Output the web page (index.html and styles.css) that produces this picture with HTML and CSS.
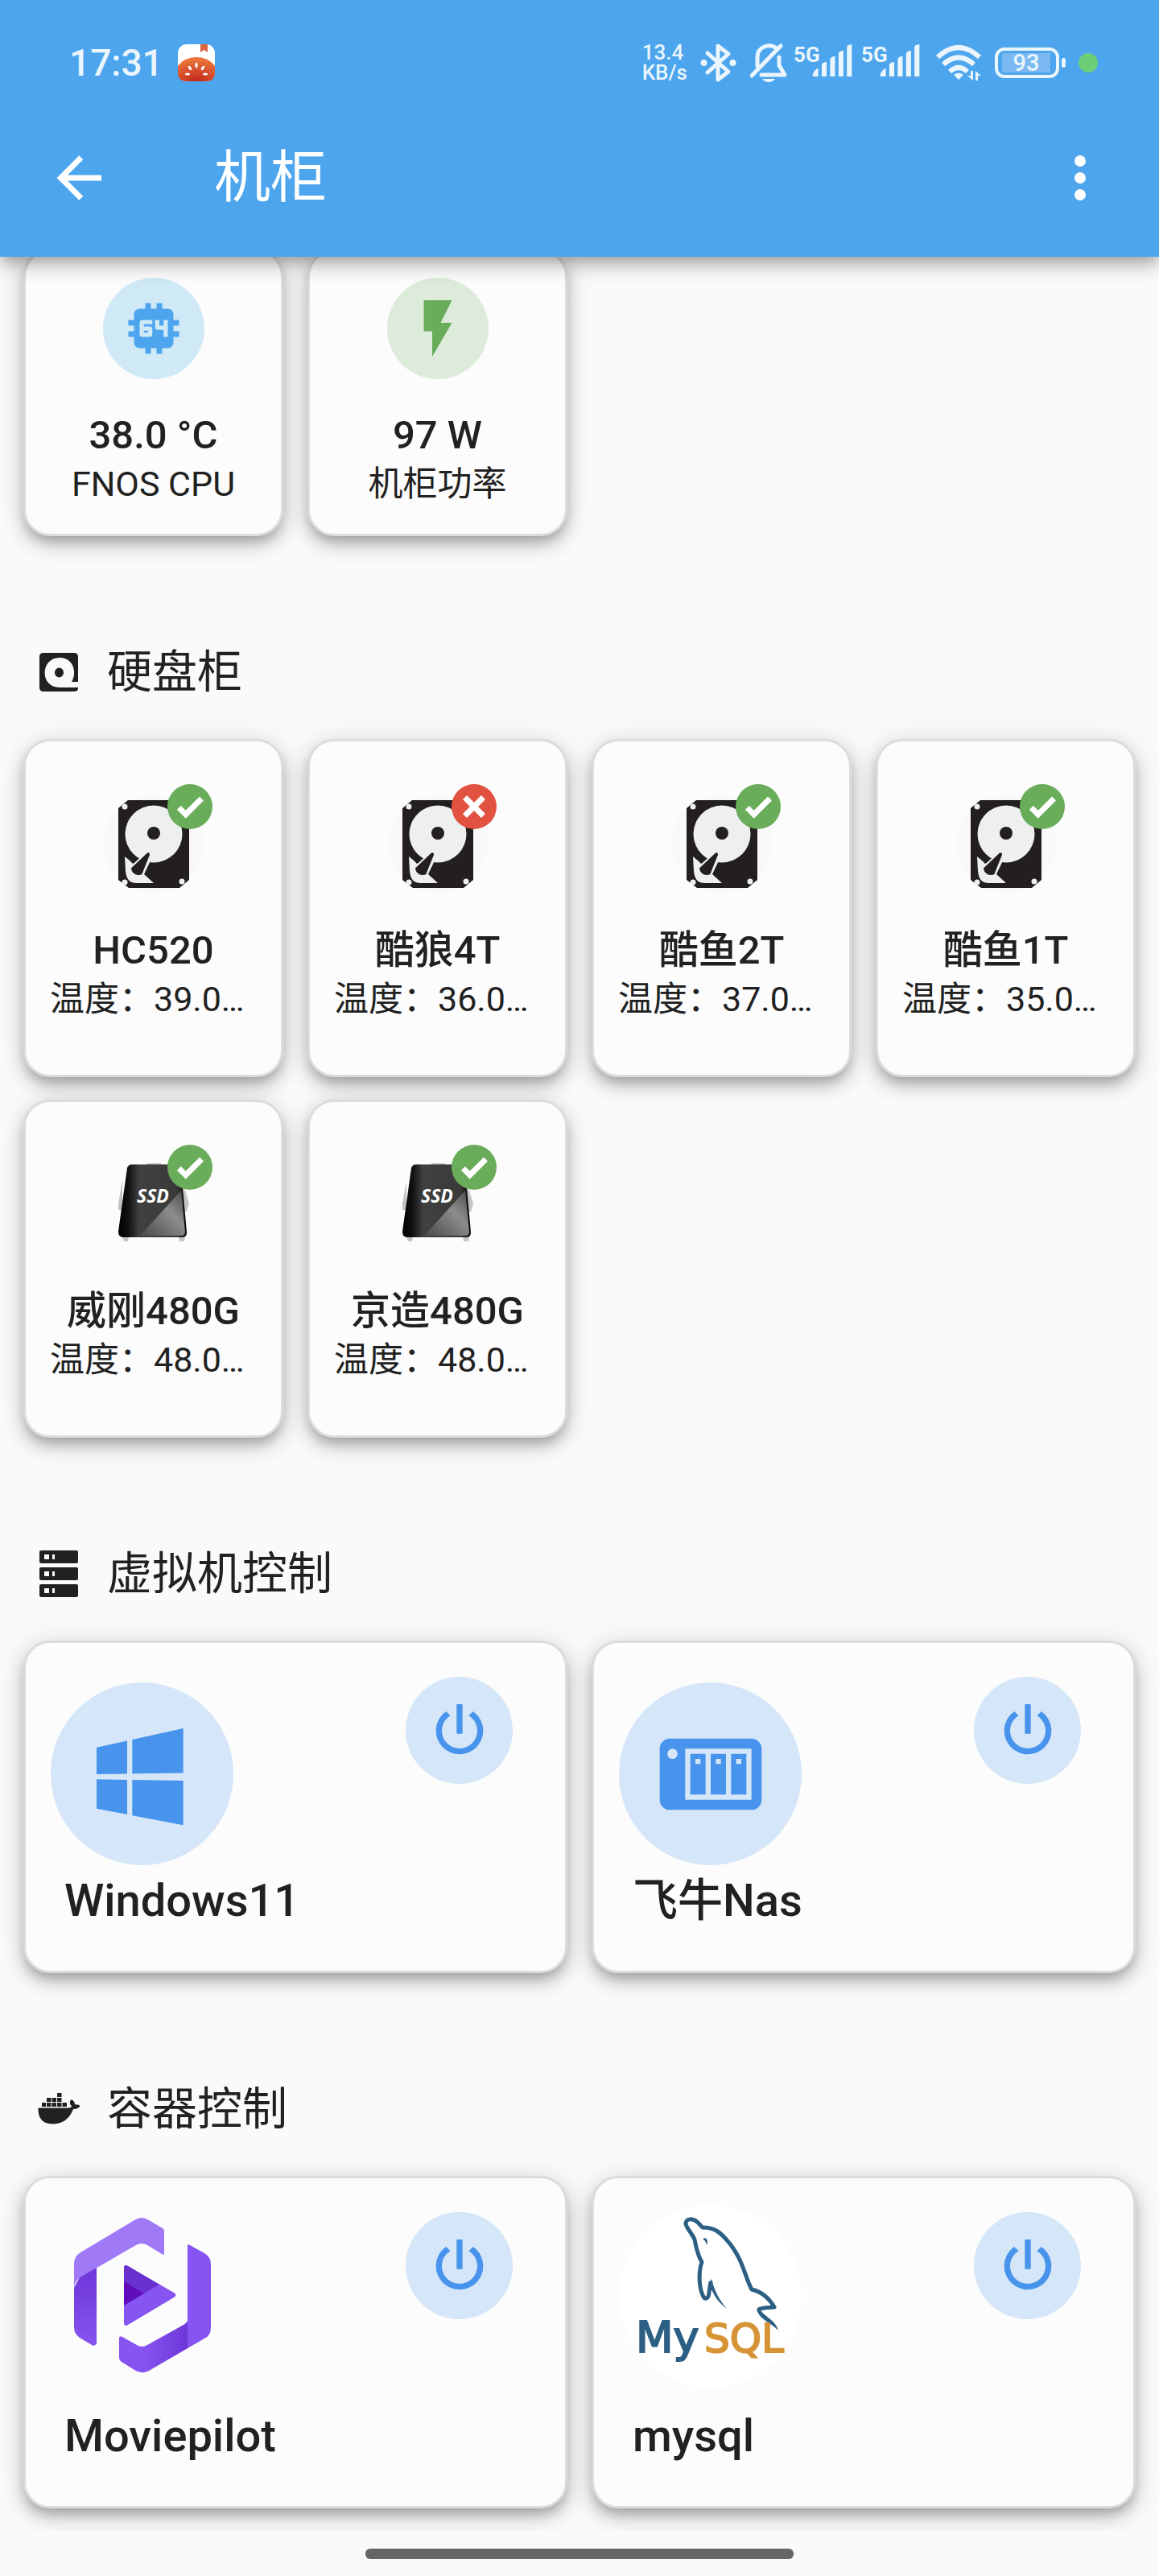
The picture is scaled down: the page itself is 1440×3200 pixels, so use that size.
FILE: index.html
```html
<!DOCTYPE html>
<html lang="zh-CN">
<head>
<meta charset="UTF-8">
<meta name="viewport" content="width=device-width, initial-scale=1.0">
<title>机柜</title>
<link rel="stylesheet" href="styles.css">
</head>

<body>
<!-- shared icons -->
<svg class="sprite" aria-hidden="true">
    <defs>
        <linearGradient id="gloss" x1="0" y1="1" x2="1" y2="0">
            <stop offset="0" stop-color="#4a4a4a"/>
            <stop offset="0.6" stop-color="#8c8c8c"/>
            <stop offset="1" stop-color="#4a4a4a"/>
        </linearGradient>
        <linearGradient id="case" x1="0" y1="0" x2="1" y2="0">
            <stop offset="0" stop-color="#000"/>
            <stop offset="0.15" stop-color="#111"/>
            <stop offset="0.3" stop-color="#404040"/>
            <stop offset="0.85" stop-color="#3a3a3a"/>
            <stop offset="1" stop-color="#000"/>
        </linearGradient>
        <linearGradient id="mp-left" x1="0" y1="0" x2="0" y2="1">
            <stop offset="0" stop-color="#6d35d8"/>
            <stop offset="1" stop-color="#8654f0"/>
        </linearGradient>
        <linearGradient id="mp-bottom" x1="0" y1="0" x2="1" y2="0">
            <stop offset="0.35" stop-color="#8654f0"/>
            <stop offset="1" stop-color="#6d35d8"/>
        </linearGradient>
        <radialGradient id="tomato" cx="0.5" cy="1" r="0.9">
            <stop offset="0" stop-color="#c4241c"/>
            <stop offset="1" stop-color="#e9743a"/>
        </radialGradient>
    </defs>
    <symbol id="check" viewBox="0 0 24 24">
        <path d="M9,20.42L2.79,14.21L5.62,11.38L9,14.77L18.88,4.88L21.71,7.71L9,20.42Z"/>
    </symbol>
    <symbol id="close" viewBox="0 0 24 24">
        <path d="M20 6.91L17.09 4L12 9.09L6.91 4L4 6.91L9.09 12L4 17.09L6.91 20L12 14.91L17.09 20L20 17.09L14.91 12L20 6.91Z"/>
    </symbol>
    <symbol id="power" viewBox="0 0 24 24">
        <path d="M16.56,5.44L15.11,6.89C16.84,7.94 18,9.83 18,12A6,6 0 0,1 12,18A6,6 0 0,1 6,12C6,9.83 7.16,7.94 8.88,6.88L7.44,5.44C5.36,6.88 4,9.28 4,12A8,8 0 0,0 12,20A8,8 0 0,0 20,12C20,9.28 18.64,6.88 16.56,5.44M13,3H11V13H13"/>
    </symbol>
    <symbol id="hdd" viewBox="0 0 126 126">
        <circle cx="63" cy="63" r="62" fill="#f9f9f9"/>
        <path fill="#231f20" d="M31 9H95L107 19V108L95 118H32L19 108V19Z"/>
        <circle cx="63" cy="51" r="35.500" fill="#eef0f0"/>
        <path fill="#eef0f0" d="M27 79L37 87L60 82L51 101L63 112H42C32 112 29 106 28 97Z"/>
        <path fill="#231f20" d="M26 76L28 70L44 84L37 88Z"/>
        <path fill="#231f20" stroke="#eef0f0" stroke-width="2" d="M53 75C56 72 59 73 59 77L49 102C41 105 34 100 34 93Z"/>
        <circle cx="63" cy="50" r="8" fill="#231f20"/>
        <g fill="#eef0f0">
            <circle cx="27" cy="17" r="3.500"/>
            <circle cx="27" cy="111" r="3.500"/>
            <circle cx="98" cy="110" r="3.500"/>
        </g>
    </symbol>
    <symbol id="ssd" viewBox="0 0 126 126">
        <path fill="#c4c4c4" d="M24 34L19 62V70H24ZM100 40L107 62L104 72H98ZM24 103H32L31 109H26ZM94 103H102L101 109H95ZM55 12H72V15H55Z"/>
        <path fill="url(#case)" d="M35 13.500H92Q96 14 97 19L104 98Q104 104 98 104H25Q19 104 19 97L30 18Q31 14 35 13.500Z"/>
        <path fill="url(#gloss)" d="M97 46L102 97Q102 102 98 102H46Z"/>
    </symbol>
    <symbol id="bars" viewBox="0 0 56 46">
        <path d="M0 46Q0 38 8 34V46ZM13 29Q14 26 20 25V46H13ZM25 21Q26 18 32 17V46H25ZM37 13Q38 10 44 9V46H37ZM49 3Q50 1 56 0V46H49Z"/>
    </symbol>
</svg>

<header class="header">
    <div class="status-bar">
        <div class="status-left">
            <span class="clock">17:31</span>
            <svg class="book" viewBox="0 0 46 46">
                <rect width="46" height="46" rx="11" fill="#fff"/>
                <path fill="#dd6240" d="M28 0H37V10L32.500 7L28 10Z"/>
                <path fill="url(#tomato)" d="M0 27Q8 16 23 16T46 27V35Q46 46 35 46H11Q0 46 0 35Z"/>
                <g fill="#fff">
                    <ellipse cx="23" cy="26" rx="1.600" ry="3.200"/>
                    <ellipse cx="15" cy="29.500" rx="1.600" ry="3" transform="rotate(-35 15 29.500)"/>
                    <ellipse cx="31" cy="29.500" rx="1.600" ry="3" transform="rotate(35 31 29.500)"/>
                    <ellipse cx="12" cy="37" rx="3" ry="1.600"/>
                    <ellipse cx="34" cy="37" rx="3" ry="1.600"/>
                </g>
            </svg>
        </div>
        <div class="status-right">
            <div class="speed">13.4<br>KB/s</div>
            <svg class="bluetooth" viewBox="0 0 46 50">
                <path class="line" d="M9 13L35 36L22 46V4L35 14L9 37"/>
                <circle cx="4.500" cy="25" r="4"/>
                <circle cx="40.500" cy="25" r="4"/>
            </svg>
            <div class="status-group">
                <svg class="bell" viewBox="0 0 46 50">
                    <path class="line" d="M2 41L38 4M9 29V18C9 5 24 0 33 7M36 18V28L43 40H14"/>
                    <path d="M15 45H31Q28 49 23 49T15 45Z"/>
                </svg>
                <div class="signal"><span>5G</span><svg><use href="#bars"/></svg></div>
                <div class="signal"><span>5G</span><svg><use href="#bars"/></svg></div>
            </div>
            <svg class="wifi" viewBox="0 0 58 44">
                <path class="arc" d="M3 15Q29 -9 55 15M10 24Q29 7 48 24M18 33Q29 23 40 33"/>
                <path d="M23 37Q29 32 35 37L29 43ZM40 38H44V32H47V44ZM50 44V32L57 38H53V44Z"/>
            </svg>
            <div class="battery"><span>93</span></div>
            <i class="dot"></i>
        </div>
    </div>
    <div class="app-bar">
        <button class="icon-button" aria-label="返回">
            <svg viewBox="0 0 24 24"><path d="M20,11V13H8L13.500,18.500L12.080,19.920L4.160,12L12.080,4.080L13.500,5.500L8,11H20Z"/></svg>
        </button>
        <h1>机柜</h1>
        <button class="icon-button" aria-label="菜单">
            <svg viewBox="0 0 24 24"><path d="M12,16A2,2 0 0,1 14,18A2,2 0 0,1 12,20A2,2 0 0,1 10,18A2,2 0 0,1 12,16M12,10A2,2 0 0,1 14,12A2,2 0 0,1 12,14A2,2 0 0,1 10,12A2,2 0 0,1 12,10M12,4A2,2 0 0,1 14,6A2,2 0 0,1 12,8A2,2 0 0,1 10,6A2,2 0 0,1 12,4Z"/></svg>
        </button>
    </div>
</header>

<main>
    <section class="grid">
        <article class="card sensor">
            <div class="circle blue">
                <svg viewBox="0 0 24 24"><path fill-rule="evenodd" d="M9,3V5H7A2,2 0 0,0 5,7V9H3V11H5V13H3V15H5V17A2,2 0 0,0 7,19H9V21H11V19H13V21H15V19H17A2,2 0 0,0 19,17V15H21V13H19V11H21V9H19V7A2,2 0 0,0 17,5H15V3H13V5H11V3M8,9H11.500V10.500H8.500V11.250H10.500A1,1 0 0,1 11.500,12.250V14A1,1 0 0,1 10.500,15H8A1,1 0 0,1 7,14V10A1,1 0 0,1 8,9M12.500,9H14V11H15.500V9H17V15H15.500V12.500H13.500A1,1 0 0,1 12.500,11.500M8.500,12.750V13.500H10V12.750"/></svg>
            </div>
            <h3>38.0 °C</h3>
            <p>FNOS CPU</p>
        </article>
        <article class="card sensor">
            <div class="circle green">
                <svg viewBox="0 0 24 24"><path d="M7,2V13H10V22L17,10H13L17,2H7Z"/></svg>
            </div>
            <h3>97 W</h3>
            <p>机柜功率</p>
        </article>
    </section>

    <h2>
        <svg viewBox="0 0 60 60"><path fill-rule="evenodd" d="M11 6H49Q54 6 54 11V42H46C53 30 48 12 31 12C7 12 6 49 31 49H54V50Q54 54 49 54H11Q6 54 6 49V11Q6 6 11 6ZM25 30.500A5.500 6 0 1 0 36 30.500A5.500 6 0 1 0 25 30.500Z"/></svg>
        硬盘柜
    </h2>
    <section class="grid">
        <article class="card disk">
            <div class="circle">
                <svg class="picture"><use href="#hdd"/></svg>
                <span class="badge ok"><svg><use href="#check"/></svg></span>
            </div>
            <h3>HC520</h3>
            <p>温度：39.0…</p>
        </article>
        <article class="card disk">
            <div class="circle">
                <svg class="picture"><use href="#hdd"/></svg>
                <span class="badge error"><svg><use href="#close"/></svg></span>
            </div>
            <h3>酷狼4T</h3>
            <p>温度：36.0…</p>
        </article>
        <article class="card disk">
            <div class="circle">
                <svg class="picture"><use href="#hdd"/></svg>
                <span class="badge ok"><svg><use href="#check"/></svg></span>
            </div>
            <h3>酷鱼2T</h3>
            <p>温度：37.0…</p>
        </article>
        <article class="card disk">
            <div class="circle">
                <svg class="picture"><use href="#hdd"/></svg>
                <span class="badge ok"><svg><use href="#check"/></svg></span>
            </div>
            <h3>酷鱼1T</h3>
            <p>温度：35.0…</p>
        </article>
        <article class="card disk">
            <div class="circle">
                <svg class="picture"><use href="#ssd"/><text class="ssd-text" x="42" y="61">SSD</text></svg>
                <span class="badge ok"><svg><use href="#check"/></svg></span>
            </div>
            <h3>威刚480G</h3>
            <p>温度：48.0…</p>
        </article>
        <article class="card disk">
            <div class="circle">
                <svg class="picture"><use href="#ssd"/><text class="ssd-text" x="42" y="61">SSD</text></svg>
                <span class="badge ok"><svg><use href="#check"/></svg></span>
            </div>
            <h3>京造480G</h3>
            <p>温度：48.0…</p>
        </article>
    </section>

    <h2>
        <svg viewBox="0 0 60 60"><path fill-rule="evenodd" d="M8 1H52Q54 1 54 3V15Q54 17 52 17H8Q6 17 6 15V3Q6 1 8 1ZM12 6V12H18V6ZM22 6V12H25V6ZM8 22H52Q54 22 54 24V36Q54 38 52 38H8Q6 38 6 36V24Q6 22 8 22ZM12 27V33H18V27ZM22 27V33H25V27ZM8 43H52Q54 43 54 45V57Q54 59 52 59H8Q6 59 6 57V45Q6 43 8 43ZM12 48V54H18V48ZM22 48V54H25V48Z"/></svg>
        虚拟机控制
    </h2>
    <section class="grid wide">
        <article class="card control vm">
            <div class="control-top">
                <div class="logo">
                    <svg viewBox="0 0 24 24"><path d="M3,12V6.750L9,5.430V11.910L3,12M20,3V11.750L10,11.900V5.210L20,3M3,13L9,13.090V19.900L3,18.750V13M20,13.250V22L10,20.090V13.100L20,13.250Z"/></svg>
                </div>
                <button class="power" aria-label="Windows11 电源"><svg><use href="#power"/></svg></button>
            </div>
            <h3>Windows11</h3>
        </article>
        <article class="card control vm">
            <div class="control-top">
                <div class="logo">
                    <svg viewBox="0 0 24 24"><path fill-rule="evenodd" d="M4,5C2.890,5 2,5.890 2,7V17C2,18.110 2.890,19 4,19H20C21.110,19 22,18.110 22,17V7C22,5.890 21.110,5 20,5H4M4.500,7A1,1 0 0,1 5.500,8A1,1 0 0,1 4.500,9A1,1 0 0,1 3.500,8A1,1 0 0,1 4.500,7M7,7H20V17H7V7M8,8V16H11V8H8M12,8V16H15V8H12M16,8V16H19V8H16M9,9H10V10H9V9M13,9H14V10H13V9M17,9H18V10H17V9Z"/></svg>
                </div>
                <button class="power" aria-label="飞牛Nas 电源"><svg><use href="#power"/></svg></button>
            </div>
            <h3>飞牛Nas</h3>
        </article>
    </section>

    <h2>
        <svg viewBox="0 0 60 60"><path d="M9 22H14V27H9ZM15 22H20.500V27H15ZM21.500 22H27V27H21.500ZM28 22H33.500V27H28ZM34.500 22H40V27H34.500ZM15 16H20.500V21H15ZM21.500 16H27V21H21.500ZM28 16H33.500V21H28ZM28 10H33.500V15H28ZM4.500 28.500H41C45 28.500 46 27 46 26C43 24 43 20 46 18C49 20 50 22 50 24.500C53 24 55 25 56.500 26C55 29 51 30.500 48 30C43 43 34 48.500 22 48.500C9 48.500 4 40 4.500 28.500Z"/></svg>
        容器控制
    </h2>
    <section class="grid wide">
        <article class="card control">
            <div class="control-top">
                <div class="logo plain">
                    <svg viewBox="0 0 227 227">
                        <path fill="url(#mp-left)" d="M29 103L38 86L57 76V172Q55 176 51 174L36 165Q29 160 29 152Z"/>
                        <path fill="#a079f7" d="M29 103V73Q29 64 37 59L104 19Q113 13 122 19L139 29Q141 30 141 33V60Q141 63 138 61L120 50Q113 46 106 50L61 76L38 89Q30 94 29 103Z"/>
                        <path fill="url(#mp-bottom)" d="M170 143Q170 146 165 149L120 174Q113 178 107 174L89 164Q85 162 85 166V190Q85 193 88 195L104 205Q113 211 122 206L172 177Z"/>
                        <path fill="#8654f0" d="M170 51Q170 48 173 50L191 60Q199 65 199 73V153Q199 162 191 166L170 178Z"/>
                        <path fill="#8654f0" d="M91 79Q91 73 96 76L153 109Q158 112 153 115L96 149Q91 152 91 146Z"/>
                        <path fill="#6a30cf" d="M91 79Q91 73 96 76L135 99L116 110L91 95Z"/>
                        <path fill="#5f0dbb" d="M91 95L116 110L91 125Z"/>
                    </svg>
                </div>
                <button class="power" aria-label="Moviepilot 电源"><svg><use href="#power"/></svg></button>
            </div>
            <h3>Moviepilot</h3>
        </article>
        <article class="card control">
            <div class="control-top">
                <div class="logo plain white">
                    <svg viewBox="0 0 227 227">
                        <path class="dolphin" d="M114 95L112 109C111 118 106 118 104 112C99 101 99 82 103 71C97 61 96 52 94 43C90 34 83 28 83 23C84 16 92 17 97 21C101 24 102 27 104 28C119 28 126 34 136 46C154 67 157 91 165 105C178 108 186 115 193 127C186 128 180 127 173 130"/>
                        <path fill="#2b5f84" d="M112 97L115 92C119 108 125 118 134 129C121 119 116 109 112 97ZM171 129L175 129C179 138 195 143 198 156C189 146 174 143 171 129ZM105 41C110 41 111 45 109 50C108 46 107 44 105 43Z"/>
                        <text class="mysql-my" x="21" y="183">My</text>
                        <text class="mysql-sql" x="106" y="183">SQL</text>
                    </svg>
                </div>
                <button class="power" aria-label="mysql 电源"><svg><use href="#power"/></svg></button>
            </div>
            <h3>mysql</h3>
        </article>
    </section>
</main>

<footer class="home-bar"><div></div></footer>
</body>
</html>
```

FILE: styles.css
```css
* {
    box-sizing: border-box;
}
body {
    margin: 0;
    background-color: #fafafa;
    color: #212121;
    font-family: Roboto, "Noto Sans CJK SC", sans-serif;
}
h1, h2, h3, p {
    margin: 0;
}
svg {
    display: block;
    fill: currentColor;
}
button {
    padding: 0;
    border: none;
    background: none;
    color: inherit;
    cursor: pointer;
}
.sprite {
    position: absolute;
    width: 0;
    height: 0;
}

/* header */
.header {
    position: sticky;
    top: 0;
    z-index: 2;
    background-color: #4ca5ed;
    color: #fff;
    box-shadow: 0 7px 14px -4px rgba(0, 0, 0, 0.2), 0 14px 18px 0 rgba(0, 0, 0, 0.14), 0 4px 35px 0 rgba(0, 0, 0, 0.12);
}
.status-bar {
    display: flex;
    justify-content: space-between;
    align-items: center;
    height: 123px;
    padding: 33px 76px 0 86px;
    color: #eaf5fd;
}
.status-left {
    display: flex;
    align-items: center;
    gap: 18px;
}
.clock {
    font-size: 46px;
    font-weight: 500;
}
.book {
    width: 46px;
    height: 46px;
}
.status-right {
    display: flex;
    align-items: center;
    gap: 16px;
}
.status-group {
    display: flex;
    align-items: center;
    gap: 8px;
}
.speed {
    font-size: 26px;
    font-weight: 500;
    line-height: 25px;
}
.bluetooth, .bell {
    width: 46px;
    height: 50px;
}
.signal {
    position: relative;
    display: flex;
    justify-content: flex-end;
    width: 76px;
    height: 46px;
}
.signal span {
    position: absolute;
    top: 0;
    left: 0;
    font-size: 26px;
    font-weight: 700;
    line-height: 26px;
}
.signal svg {
    width: 56px;
    height: 40px;
}
.wifi {
    width: 58px;
    height: 44px;
}
.line {
    fill: none;
    stroke: currentColor;
    stroke-width: 5;
    stroke-linecap: round;
    stroke-linejoin: round;
}
.arc {
    fill: none;
    stroke: currentColor;
    stroke-width: 6;
}
.battery {
    position: relative;
    width: 80px;
    height: 38px;
    margin-right: 8px;
    padding: 3px 5px;
    border: 4px solid #eaf5fd;
    border-radius: 12px;
}
.battery span {
    display: block;
    width: 60px;
    border-radius: 4px 0 0 4px;
    background-color: #7ab9f1;
    font-size: 29px;
    font-weight: 500;
    line-height: 24px;
    text-align: center;
}
.battery::after {
    content: "";
    position: absolute;
    top: 9px;
    right: -12px;
    width: 5px;
    height: 12px;
    border-radius: 3px;
    background-color: #eaf5fd;
}
.dot {
    width: 24px;
    height: 24px;
    border-radius: 50%;
    background-color: #6ccf78;
}
.app-bar {
    display: flex;
    align-items: center;
    height: 196px;
    padding: 0 56px;
}
.app-bar h1 {
    flex: 1;
    margin-left: 126px;
    font-size: 70px;
    font-weight: 400;
    line-height: 84px;
}
.icon-button svg {
    width: 84px;
    height: 84px;
}

/* cards */
main {
    margin-top: -9px;
    padding: 0 29px 28px;
    overflow: hidden;
}
.grid {
    display: grid;
    grid-template-columns: repeat(4, 1fr);
    gap: 28px 30px;
}
.grid.wide {
    grid-template-columns: repeat(2, 1fr);
}
h2 {
    display: flex;
    align-items: center;
    gap: 30px;
    padding: 137px 14px 51px;
    font-size: 56px;
    font-weight: 400;
    line-height: 64px;
}
h2 svg {
    width: 60px;
    height: 60px;
}
.card {
    min-width: 0;
    border: 3px solid #dcdcdc;
    border-radius: 33px;
    background-color: #fcfcfc;
    box-shadow: 0 9px 14px -3px rgba(0, 0, 0, 0.2), 0 12px 24px 0 rgba(0, 0, 0, 0.14), 0 4px 35px 0 rgba(0, 0, 0, 0.12);
}
.sensor, .disk {
    display: flex;
    flex-direction: column;
    align-items: center;
    padding: 32px 30px;
    white-space: nowrap;
}
.disk {
    padding: 64px 30px;
}
.card h3 {
    font-size: 49px;
    font-weight: 500;
    line-height: 60px;
}
.sensor h3, .disk h3 {
    margin-top: 40px;
}
.card p {
    font-size: 43px;
    line-height: 60px;
}
.disk p {
    align-self: flex-start;
}
.circle {
    position: relative;
    display: flex;
    align-items: center;
    justify-content: center;
    width: 126px;
    height: 126px;
    border-radius: 50%;
}
.circle svg {
    width: 84px;
    height: 84px;
}
.circle .picture {
    width: 126px;
    height: 126px;
}
.blue {
    background-color: #d0e9f7;
    color: #4ca5ed;
}
.green {
    background-color: #dcebda;
    color: #69ad5b;
}
.badge {
    position: absolute;
    top: -11px;
    right: -10px;
    display: flex;
    align-items: center;
    justify-content: center;
    width: 56px;
    height: 56px;
    border-radius: 50%;
    color: #fff;
}
.circle .badge svg {
    width: 42px;
    height: 42px;
}
.ok {
    background-color: #69ad5b;
}
.error {
    background-color: #e15241;
}
.ssd-text {
    fill: #fff;
    font-family: "Open Sans", sans-serif;
    font-size: 23px;
    font-style: italic;
    font-weight: 700;
}

/* vm and container cards */
.control {
    padding: 33px 65px 54px 31px;
}
.control-top {
    display: flex;
    align-items: flex-start;
    justify-content: space-between;
    height: 254px;
}
.logo {
    display: flex;
    align-items: center;
    justify-content: center;
    width: 227px;
    height: 227px;
    border-radius: 50%;
    background-color: #d5e6f8;
    color: #4894ed;
}
.logo svg {
    width: 152px;
    height: 152px;
}
.vm .logo {
    margin-top: 16px;
}
.logo.plain {
    background: none;
}
.logo.white {
    background-color: #fff;
}
.plain svg {
    width: 227px;
    height: 227px;
}
.power {
    display: flex;
    align-items: center;
    justify-content: center;
    width: 133px;
    height: 133px;
    margin-top: 9px;
    border-radius: 50%;
    background-color: #d5e6f8;
    color: #4894ed;
}
.power svg {
    width: 88px;
    height: 88px;
}
.control h3 {
    margin-left: 17px;
    font-size: 56px;
    line-height: 66px;
}
.dolphin {
    fill: none;
    stroke: #2b5f84;
    stroke-width: 5;
    stroke-linejoin: round;
}
.mysql-my, .mysql-sql {
    fill: #2b5f84;
    stroke: #2b5f84;
    stroke-width: 2;
    font-family: "DejaVu Sans", sans-serif;
    font-size: 54px;
}
.mysql-sql {
    fill: #d69436;
    stroke: #d69436;
    font-size: 50px;
}

/* gesture bar */
.home-bar {
    height: 56px;
    padding-top: 22px;
}
.home-bar div {
    width: 37%;
    height: 13px;
    margin: 0 auto;
    border-radius: 6px;
    background-color: #666;
}
```
